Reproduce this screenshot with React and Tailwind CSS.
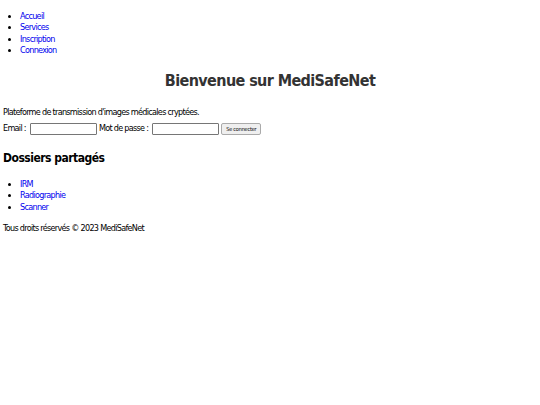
export default function App() {
  const font = { fontFamily: '"DejaVu Sans Condensed", "DejaVu Sans", sans-serif' };
  return (
    <div className="min-h-[405px] w-[540px] bg-white text-black text-[9px] leading-[11.6px] tracking-[-0.7px]" style={font}>
      <nav className="pt-[10.6px]">
        <ul className="list-disc pl-[20px] m-0">
          <li><a className="text-[#0000ee]">Accueil</a></li>
          <li><a className="text-[#0000ee]">Services</a></li>
          <li><a className="text-[#0000ee]">Inscription</a></li>
          <li><a className="text-[#0000ee]">Connexion</a></li>
        </ul>
      </nav>
      <h1 className="mt-[13.8px] text-center text-[16px] leading-[20px] tracking-[-0.6px] font-bold text-[#333]">Bienvenue sur MediSafeNet</h1>
      <div className="px-[3px]">
        <p className="mt-[15.8px]">Plateforme de transmission d'images médicales cryptées.</p>
        <form className="mt-[4.1px] flex items-center h-[13px]">
          <span>Email :</span>
          <input className="ml-[4px] h-[12px] w-[67px] border border-[#767676] rounded-[1px] bg-white" />
          <span className="ml-[2px]">Mot de passe :</span>
          <input className="ml-[4px] h-[12px] w-[67px] border border-[#767676] rounded-[1px] bg-white" />
          <button type="button" className="ml-[2px] h-[12px] w-[40px] text-[5.5px] leading-[10px] tracking-[-0.2px] border border-[#aaa] rounded-[2px] bg-[#efefef]">Se connecter</button>
        </form>
        <h2 className="mt-[14.5px] text-[12px] leading-[16px] tracking-[-0.5px] font-bold text-black">Dossiers partagés</h2>
      </div>
      <ul className="list-disc pl-[20px] mt-[13px]">
        <li><a className="text-[#0000ee]">IRM</a></li>
        <li><a className="text-[#0000ee]">Radiographie</a></li>
        <li><a className="text-[#0000ee]">Scanner</a></li>
      </ul>
      <footer className="px-[3px] mt-[9.4px]">Tous droits réservés © 2023 MediSafeNet</footer>
    </div>
  );
}
